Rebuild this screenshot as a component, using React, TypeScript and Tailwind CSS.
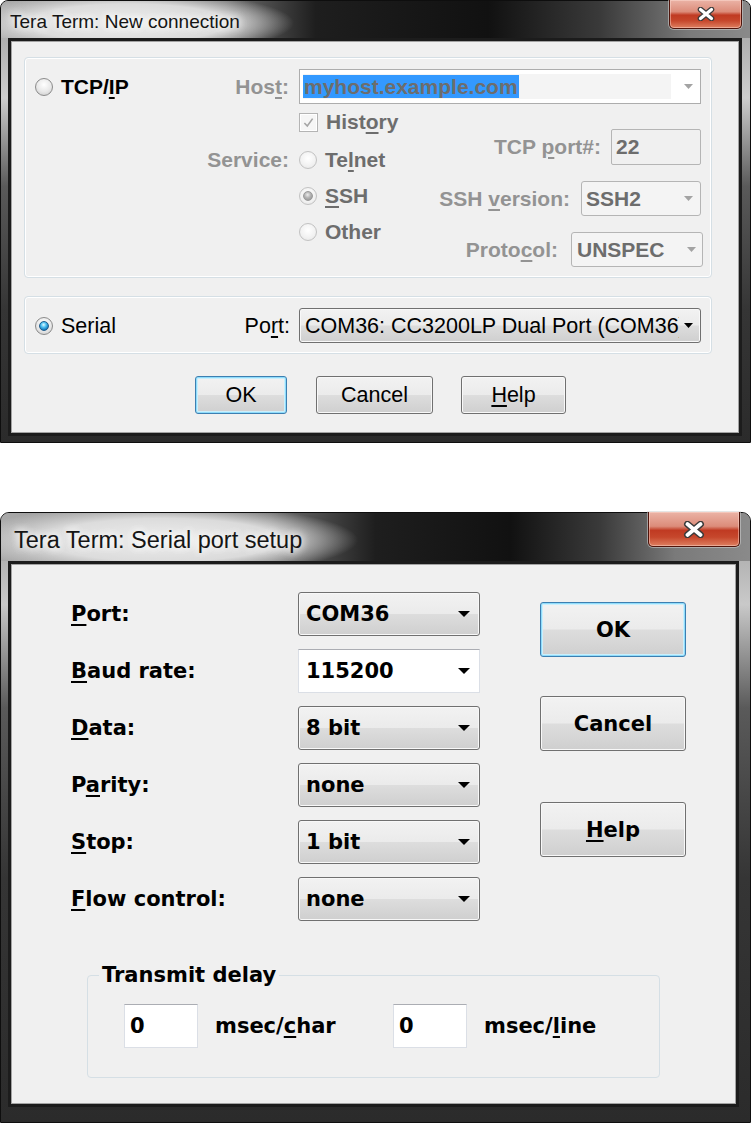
import React from "react";

const U = ({ children }: { children: React.ReactNode }) => (
  <span className="underline decoration-[1.5px] underline-offset-[3px]">{children}</span>
);

function Arrow({ className, color }: { className: string; color: string }) {
  return (
    <svg className={className} viewBox="0 0 10 5" preserveAspectRatio="none">
      <path d="M0 0H10L5 5Z" fill={color} />
    </svg>
  );
}

function Radio({ v }: { v: "off" | "on" | "dis" | "disOn" }) {
  const disabled = v === "dis" || v === "disOn";
  return (
    <span
      className={
        disabled
          ? "flex h-[18px] w-[18px] shrink-0 items-center justify-center rounded-full border border-[#c2c2c2] bg-[radial-gradient(circle_at_50%_40%,#ffffff_0%,#f1f1f1_60%,#e2e2e2_100%)]"
          : "flex h-[18px] w-[18px] shrink-0 items-center justify-center rounded-full border border-[#8b8b8b] bg-[radial-gradient(circle_at_50%_35%,#ffffff_0%,#e8e8e8_55%,#c6c6c6_100%)]"
      }
    >
      {v === "on" && (
        <span className="h-[10px] w-[10px] rounded-full border border-[#1f5d8c] bg-[radial-gradient(circle_at_45%_35%,#e4f8ff_0%,#52c4f3_35%,#1276bb_75%,#0b4a80_100%)]" />
      )}
      {v === "disOn" && (
        <span className="h-[10px] w-[10px] rounded-full border border-[#9a9a9a] bg-[radial-gradient(circle_at_45%_35%,#ececec_0%,#b3b3b3_45%,#8c8c8c_100%)]" />
      )}
    </span>
  );
}

function CloseBtn({ className, xw, xh }: { className: string; xw: number; xh: number }) {
  return (
    <div
      className={`flex shrink-0 items-center justify-center rounded-b-[5px] border border-t-0 border-[#4f140b] bg-[linear-gradient(to_bottom,#ebb3a6_0%,#dc8c7a_42%,#c03a22_54%,#c6472c_74%,#de7f60_100%)] shadow-[inset_0_0_0_1px_rgba(255,225,215,0.45),0_0_0_1px_rgba(210,210,210,0.55)] ${className}`}
    >
      <svg width={xw} height={xh} viewBox="0 0 20 14">
        <path d="M4.5 2.5L15.5 11.5M15.5 2.5L4.5 11.5" stroke="#3b3b3b" strokeWidth="5.6" strokeLinecap="round" fill="none" />
        <path d="M4.5 2.5L15.5 11.5M15.5 2.5L4.5 11.5" stroke="#ffffff" strokeWidth="3.2" strokeLinecap="round" fill="none" />
      </svg>
    </div>
  );
}

function Btn({ className, focused, children }: { className: string; focused?: boolean; children: React.ReactNode }) {
  return (
    <div
      className={`flex items-center justify-center rounded-[3px] border bg-[linear-gradient(to_bottom,#f2f2f2_0%,#ebebeb_49%,#dddddd_51%,#cfcfcf_100%)] text-black ${
        focused
          ? "border-[#3c7fb1] shadow-[inset_0_0_0_1px_#8fdcfb,inset_0_0_0_2px_#cbeffc]"
          : "border-[#707070] shadow-[inset_0_0_0_1px_#f8f8f8]"
      } ${className}`}
    >
      {children}
    </div>
  );
}

function Checkbox() {
  return (
    <span className="flex h-[19px] w-[19px] shrink-0 items-center justify-center border border-[#b4b4b4] bg-[#f6f6f6] shadow-[inset_0_0_0_1px_#ffffff]">
      <svg viewBox="0 0 12 12" className="h-[13px] w-[13px]">
        <path d="M2.2 6.4L4.9 9.3L9.8 2.4" stroke="#a6a6a6" strokeWidth="1.5" fill="none" />
      </svg>
    </span>
  );
}

function Dialog1() {
  return (
    <div className="flex h-[443px] w-[751px] flex-col rounded-t-[8px] border border-[#0e0e0e] bg-[linear-gradient(to_bottom,#9d9d9d_0%,#cdcdcd_22%,#5a5a5a_42%,#353535_70%,#2b2b2b_100%)]">
      <div className="flex h-[37px] shrink-0 justify-between rounded-t-[7px] [background:radial-gradient(ellipse_165px_32px_at_128px_22px,rgba(238,238,238,1)_0%,rgba(224,224,224,0.95)_60%,rgba(210,210,210,0)_100%),linear-gradient(to_right,#a9a9a9_0%,#707070_30%,#1e1e1e_42%,#111111_65%,#3a3a3a_80%,#7a7a7a_92%,#8a8a8a_100%)]">
        <div className="ml-[9px] mt-[10px] font-['Liberation_Sans',Arial,sans-serif] text-[19px] leading-[22px] text-[#151515] [text-shadow:0_0_8px_#ffffff,0_0_8px_#ffffff]">
          Tera Term: New connection
        </div>
        <CloseBtn className="-mt-px mr-[8px] h-[29px] w-[73px]" xw={20} xh={14} />
      </div>
      <div className="flex flex-1 flex-col pb-[6px] pl-[7px] pr-[8px]">
        <div className="flex flex-1 flex-col border-[3px] border-[#1c1c1c]">
          <div className="flex-1 border border-[#a3a3a3] bg-[#f0f0f0] pl-[12px] pt-[15px] font-['Liberation_Sans',Arial,sans-serif] text-[21px] font-bold leading-[24px] text-black">
            {/* TCP/IP group */}
            <div className="flex h-[221px] w-[688px] rounded-[4px] border border-[#d5dfe5] shadow-[inset_0_0_0_1px_#ffffff]">
              <div className="flex w-[274px] flex-col">
                <div className="mt-[11px] flex h-[35px] items-center justify-between pl-[10px] pr-[10px]">
                  <div className="flex items-center gap-[8px]">
                    <Radio v="off" />
                    <span>
                      TCP/<U>I</U>P
                    </span>
                  </div>
                  <span className="text-[#939393]">
                    Hos<U>t</U>:
                  </span>
                </div>
                <div className="mt-[46px] flex h-[20px] items-center justify-end pr-[10px] text-[#939393]">Service:</div>
              </div>
              <div className="flex w-[404px] flex-col">
                <div className="mt-[11px] flex h-[35px] w-[402px] items-center border border-[#adadad] bg-white pl-[3px]">
                  <span className="flex h-[25px] w-[368px] items-center bg-[#f4f4f4]">
                    <span className="bg-[#3399ff] px-px leading-[23px] text-[#6d6d6d]">myhost.example.com</span>
                  </span>
                  <Arrow className="ml-[13px] h-[5px] w-[9px]" color="#a3a3a3" />
                </div>
                <div className="flex justify-between">
                  <div className="flex flex-col text-[#6d6d6d]">
                    <div className="mt-[8px] flex h-[20px] items-center gap-[8px]">
                      <Checkbox />
                      <span>
                        Hist<U>o</U>ry
                      </span>
                    </div>
                    <div className="mt-[18px] flex h-[20px] items-center gap-[8px]">
                      <Radio v="dis" />
                      <span>
                        Te<U>l</U>net
                      </span>
                    </div>
                    <div className="mt-[16px] flex h-[20px] items-center gap-[8px]">
                      <Radio v="disOn" />
                      <span>
                        <U>S</U>SH
                      </span>
                    </div>
                    <div className="mt-[16px] flex h-[20px] items-center gap-[8px]">
                      <Radio v="dis" />
                      <span>Other</span>
                    </div>
                  </div>
                  <div className="flex flex-col items-end">
                    <div className="mr-[2px] mt-[25px] flex h-[36px] items-center gap-[10px]">
                      <span className="text-[#939393]">
                        TCP <U>p</U>ort#:
                      </span>
                      <div className="flex h-[36px] w-[90px] items-center rounded-[2px] border border-[#b5b5b5] bg-[#f0f0f0] pl-[4px] text-[#6d6d6d]">
                        22
                      </div>
                    </div>
                    <div className="mr-[2px] mt-[16px] flex h-[35px] items-center gap-[11px]">
                      <span className="text-[#939393]">
                        SSH <U>v</U>ersion:
                      </span>
                      <div className="flex h-[35px] w-[120px] items-center rounded-[3px] border border-[#b5b5b5] bg-[#f4f4f4] pl-[4px] pr-[7px] text-[#6d6d6d]">
                        SSH2
                        <Arrow className="ml-auto h-[5px] w-[9px]" color="#a3a3a3" />
                      </div>
                    </div>
                    <div className="mt-[16px] flex h-[35px] items-center gap-[13px]">
                      <span className="text-[#939393]">
                        Proto<U>c</U>ol:
                      </span>
                      <div className="flex h-[35px] w-[132px] items-center rounded-[3px] border border-[#b5b5b5] bg-[#f4f4f4] pl-[5px] pr-[6px] text-[#6d6d6d]">
                        UNSPEC
                        <Arrow className="ml-auto h-[5px] w-[9px]" color="#a3a3a3" />
                      </div>
                    </div>
                  </div>
                </div>
              </div>
            </div>
            {/* Serial group */}
            <div className="mt-[18px] flex h-[58px] w-[688px] rounded-[4px] border border-[#d5dfe5] text-[21.5px] font-normal shadow-[inset_0_0_0_1px_#ffffff]">
              <div className="mt-[11px] flex h-[35px] w-[274px] items-center justify-between pl-[10px] pr-[9px]">
                <div className="flex items-center gap-[8px]">
                  <Radio v="on" />
                  <span>Serial</span>
                </div>
                <span>
                  Po<U>r</U>t:
                </span>
              </div>
              <div className="mt-[11px] flex h-[35px] w-[402px] items-center rounded-[3px] border border-[#707070] bg-[linear-gradient(to_bottom,#f2f2f2_0%,#ebebeb_49%,#dddddd_51%,#cfcfcf_100%)] pl-[5px] shadow-[inset_0_0_0_1px_#f8f8f8]">
                <span className="w-[374px] overflow-hidden whitespace-nowrap">COM36: CC3200LP Dual Port (COM36)</span>
                <Arrow className="ml-[5px] h-[5px] w-[9px]" color="#000000" />
              </div>
            </div>
            {/* Buttons */}
            <div className="mt-[22px] flex text-[21.5px] font-normal">
              <Btn focused className="ml-[171px] h-[38px] w-[92px]">
                OK
              </Btn>
              <Btn className="ml-[29px] h-[38px] w-[117px]">Cancel</Btn>
              <Btn className="ml-[28px] h-[38px] w-[105px]">
                <span>
                  <U>H</U>elp
                </span>
              </Btn>
            </div>
          </div>
        </div>
      </div>
    </div>
  );
}

function Combo({ children, editable }: { children: React.ReactNode; editable?: boolean }) {
  return (
    <div
      className={
        editable
          ? "flex h-[44px] w-[182px] items-center border border-[#dbdfe6] border-t-[#abadb3] bg-white pl-[7px] pr-[9px]"
          : "flex h-[44px] w-[182px] items-center rounded-[3px] border border-[#707070] bg-[linear-gradient(to_bottom,#f2f2f2_0%,#ebebeb_49%,#dddddd_51%,#cfcfcf_100%)] pl-[7px] pr-[9px] shadow-[inset_0_0_0_1px_#f8f8f8]"
      }
    >
      {children}
      <Arrow className="ml-auto h-[6px] w-[12px]" color="#000000" />
    </div>
  );
}

function Row({ label, children, editable }: { label: React.ReactNode; children: React.ReactNode; editable?: boolean }) {
  return (
    <>
      <div className="flex h-[44px] items-center">{label}</div>
      <Combo editable={editable}>{children}</Combo>
    </>
  );
}

function Dialog2() {
  return (
    <div className="flex h-[611px] w-[751px] flex-col rounded-t-[9px] border border-[#0e0e0e] bg-[linear-gradient(to_bottom,#9d9d9d_0%,#c9c9c9_15%,#5a5a5a_32%,#353535_60%,#2b2b2b_100%)]">
      <div className="flex h-[48px] shrink-0 justify-between rounded-t-[8px] [background:radial-gradient(ellipse_195px_36px_at_162px_27px,rgba(238,238,238,1)_0%,rgba(224,224,224,0.95)_60%,rgba(210,210,210,0)_100%),linear-gradient(to_right,#a9a9a9_0%,#707070_36%,#1e1e1e_50%,#111111_68%,#3a3a3a_80%,#7a7a7a_90%,#8a8a8a_100%)]">
        <div className="ml-[13px] mt-[13px] font-['Liberation_Sans',Arial,sans-serif] text-[23.5px] leading-[28px] text-[#151515] [text-shadow:0_0_9px_#ffffff,0_0_9px_#ffffff]">
          Tera Term: Serial port setup
        </div>
        <CloseBtn className="-mt-px mr-[10px] h-[35px] w-[92px]" xw={24} xh={17} />
      </div>
      <div className="flex flex-1 flex-col pb-[15px] pl-[7px] pr-[11px]">
        <div className="flex flex-1 flex-col border-[3px] border-[#1c1c1c]">
          <div className="flex-1 border border-[#a3a3a3] bg-[#f0f0f0] pl-[59px] pt-[27px] font-['DejaVu_Sans',sans-serif] text-[21px] font-bold leading-[26px] text-black">
            <div className="flex">
              <div className="grid grid-cols-[227px_182px] gap-y-[13px]">
                <Row label={<span><U>P</U>ort:</span>}>COM36</Row>
                <Row editable label={<span><U>B</U>aud rate:</span>}>115200</Row>
                <Row label={<span><U>D</U>ata:</span>}>8 bit</Row>
                <Row label={<span>P<U>a</U>rity:</span>}>none</Row>
                <Row label={<span><U>S</U>top:</span>}>1 bit</Row>
                <Row label={<span><U>F</U>low control:</span>}>none</Row>
              </div>
              <div className="ml-[60px] flex flex-col pt-[10px]">
                <Btn focused className="h-[55px] w-[146px]">
                  OK
                </Btn>
                <Btn className="mt-[39px] h-[55px] w-[146px]">Cancel</Btn>
                <Btn className="mt-[51px] h-[55px] w-[146px]">
                  <span>
                    <U>H</U>elp
                  </span>
                </Btn>
              </div>
            </div>
            <fieldset className="ml-[16px] mt-[42px] w-[573px] rounded-[4px] border border-[#d5dfe5] pb-[29px]">
              <legend className="ml-[11px] px-[3px] leading-[24px]">Transmit delay</legend>
              <div className="flex items-center pl-[36px] pt-[17px]">
                <div className="flex h-[44px] w-[74px] items-center border border-[#dbdfe6] border-t-[#abadb3] bg-white pl-[5px]">0</div>
                <span className="ml-[17px] w-[178px]">
                  msec/<U>c</U>har
                </span>
                <div className="flex h-[44px] w-[74px] items-center border border-[#dbdfe6] border-t-[#abadb3] bg-white pl-[5px]">0</div>
                <span className="ml-[17px]">
                  msec/<U>l</U>ine
                </span>
              </div>
            </fieldset>
          </div>
        </div>
      </div>
    </div>
  );
}

export default function App() {
  return (
    <div className="h-[1123px] w-[751px] overflow-hidden bg-white">
      <Dialog1 />
      <div className="h-[69px]" />
      <Dialog2 />
    </div>
  );
}
